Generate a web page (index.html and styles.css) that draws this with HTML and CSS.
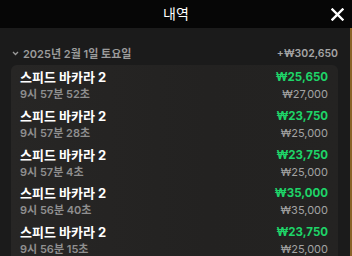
FILE: index.html
```html
<!DOCTYPE html>
<html lang="ko">
<head>
    <meta charset="UTF-8">
    <meta name="viewport" content="width=device-width, initial-scale=1.0">
    <title>내역</title>
    <link rel="stylesheet" href="styles.css">
</head>
<body>

    <div class="header">
        <span class="title">내역</span>
        <span class="close">
            <svg width="13" height="13" viewBox="0 0 13 13">
                <path d="M1.5 1.5 L11.5 11.5 M11.5 1.5 L1.5 11.5" stroke="#fff" stroke-width="2.4" stroke-linecap="square"/>
            </svg>
        </span>
    </div>

    <div class="content">
        <!-- 날짜별 그룹 -->
        <div class="day-row">
            <span class="day">
                <svg width="7" height="5" viewBox="0 0 7 5">
                    <path d="M1 1 L3.5 3.5 L6 1" stroke="#9a9a9a" stroke-width="1.3" fill="none"/>
                </svg>
                2025년 2월 1일 토요일
            </span>
            <span class="day-total">+₩302,650</span>
        </div>

        <div class="card">
            <div class="item">
                <div class="line">
                    <span class="game">스피드 바카라 2</span>
                    <span class="win">₩25,650</span>
                </div>
                <div class="line">
                    <span class="time">9시 57분 52초</span>
                    <span class="bet">₩27,000</span>
                </div>
            </div>
            <div class="item">
                <div class="line">
                    <span class="game">스피드 바카라 2</span>
                    <span class="win">₩23,750</span>
                </div>
                <div class="line">
                    <span class="time">9시 57분 28초</span>
                    <span class="bet">₩25,000</span>
                </div>
            </div>
            <div class="item">
                <div class="line">
                    <span class="game">스피드 바카라 2</span>
                    <span class="win">₩23,750</span>
                </div>
                <div class="line">
                    <span class="time">9시 57분 4초</span>
                    <span class="bet">₩25,000</span>
                </div>
            </div>
            <div class="item">
                <div class="line">
                    <span class="game">스피드 바카라 2</span>
                    <span class="win">₩35,000</span>
                </div>
                <div class="line">
                    <span class="time">9시 56분 40초</span>
                    <span class="bet">₩35,000</span>
                </div>
            </div>
            <div class="item">
                <div class="line">
                    <span class="game">스피드 바카라 2</span>
                    <span class="win">₩23,750</span>
                </div>
                <div class="line">
                    <span class="time">9시 56분 15초</span>
                    <span class="bet">₩25,000</span>
                </div>
            </div>
        </div>
    </div>

</body>
</html>
```

FILE: styles.css
```css
* {
    margin: 0;
    padding: 0;
    box-sizing: border-box;
    font-family: 'Inter', 'Noto Sans CJK KR', sans-serif;
}

body {
    width: 352px;
    height: 256px;
    overflow: hidden;
    background-color: #1b1b1b;
}

/* 상단 바 */
.header {
    height: 28px;
    background-color: #060606;
    display: flex;
    justify-content: center;
    align-items: center;
    position: relative;
}

.title {
    color: #fff;
    font-size: 14px;
    line-height: 16px;
}

.close {
    position: absolute;
    right: 8px;
    top: 8px;
    display: flex;
}

.content {
    height: 228px;
    padding: 17px 12px 0 11px;
    border-right: 2px solid #8a6328;
}

.day-row {
    display: flex;
    justify-content: space-between;
    align-items: center;
    height: 16px;
    padding-left: 1px;
    margin-bottom: 4px;
    color: #9c9c9c;
    font-size: 11px;
    font-weight: 600;
}

.day {
    display: flex;
    align-items: center;
    gap: 4px;
}

.day-total {
    color: #a5a5a5;
    font-size: 10.5px;
}

.card {
    background: linear-gradient(90deg, #272625, #232221 60%, #242322);
    border-radius: 6px;
    padding: 3px 10px 0 9px;
    height: 200px;
}

.item {
    margin-bottom: 4.8px;
}

.line {
    display: flex;
    justify-content: space-between;
    align-items: center;
}

.game {
    color: #fff;
    font-size: 13px;
    font-weight: 700;
    line-height: 18px;
}

.win {
    color: #1ed468;
    font-size: 11.5px;
    font-weight: 700;
    line-height: 18px;
}

.time {
    color: #8f8f8f;
    font-size: 11px;
    font-weight: 600;
    line-height: 16px;
}

.bet {
    color: #a3a3a3;
    font-size: 11px;
    line-height: 16px;
}
```
